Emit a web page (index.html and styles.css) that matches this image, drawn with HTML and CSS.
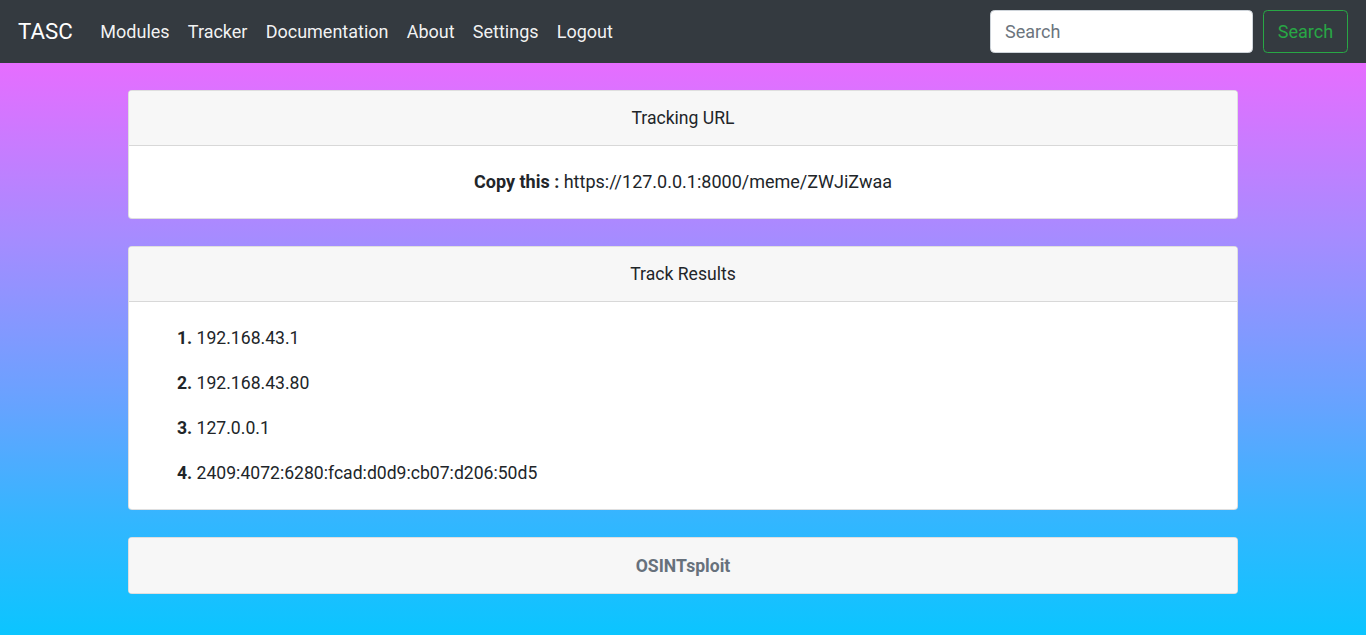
FILE: index.html
```html
<!DOCTYPE html>
<html lang="en">
<head>
<meta charset="utf-8">
<title>TASC - Tracker</title>
<link rel="stylesheet" href="styles.css">
</head>
<body>
<nav class="navbar">
  <a class="brand" href="#">TASC</a>
  <ul class="nav-links">
    <li><a href="#">Modules</a></li>
    <li><a href="#">Tracker</a></li>
    <li><a href="#">Documentation</a></li>
    <li><a href="#">About</a></li>
    <li><a href="#">Settings</a></li>
    <li><a href="#">Logout</a></li>
  </ul>
  <form class="search-form">
    <input class="search-input" type="search" placeholder="Search">
    <button class="search-btn" type="button">Search</button>
  </form>
</nav>
<main class="page">
  <div class="container">
    <section class="card">
      <div class="card-header">Tracking URL</div>
      <div class="card-body center">
        <b>Copy this :</b> https://127.0.0.1:8000/meme/ZWJiZwaa
      </div>
    </section>
    <section class="card">
      <div class="card-header">Track Results</div>
      <div class="card-body results">
        <p><b>1.</b> 192.168.43.1</p>
        <p><b>2.</b> 192.168.43.80</p>
        <p><b>3.</b> 127.0.0.1</p>
        <p><b>4.</b> 2409:4072:6280:fcad:d0d9:cb07:d206:50d5</p>
      </div>
    </section>
    <section class="card">
      <div class="card-header muted">OSINTsploit</div>
    </section>
  </div>
</main>
</body>
</html>
```
FILE: styles.css
```css
* { box-sizing: border-box; }
html, body { margin: 0; height: 100%; }
body {
  font-family: Roboto, "Liberation Sans", sans-serif;
  font-size: 18px;
  line-height: 1.5;
  color: #212529;
  display: flex;
  flex-direction: column;
  background: #0dc6ff;
}
.navbar {
  background: #343a40;
  height: 63px;
  padding: 0 18px;
  display: flex;
  align-items: center;
  flex-shrink: 0;
}
.brand {
  color: #fff;
  text-decoration: none;
  font-size: 22.3px;
  margin-right: 18.5px;
  line-height: 1;
}
.nav-links {
  list-style: none;
  display: flex;
  margin: 0;
  padding: 0;
  flex: 1;
}
.nav-links a {
  color: rgba(255,255,255,.95);
  text-decoration: none;
  padding: 0 9.1px;
  display: block;
}
.search-form {
  display: flex;
  gap: 10px;
}
.search-input {
  width: 263px;
  height: 43px;
  border: 1px solid #ced4da;
  border-radius: 4.5px;
  padding: 0 14px;
  font: inherit;
  color: #495057;
  background: #fff;
}
.search-input::placeholder { color: #6c757d; }
.search-btn {
  height: 43px;
  width: 85px;
  border: 1px solid #28a745;
  border-radius: 4.5px;
  background: transparent;
  color: #28a745;
  font: inherit;
  padding: 0;
}
.page {
  flex: 1;
  background: linear-gradient(180deg, #e66dff 0%, #a78bff 30%, #66a3ff 60%, #33b6ff 80%, #0bc5ff 100%);
  padding-top: 27px;
}
.container {
  width: 1110px;
  margin: 0 auto;
  display: flex;
  flex-direction: column;
  gap: 27px;
}
.card {
  background: #fff;
  border: 1px solid rgba(0,0,0,.125);
  border-radius: 4px;
  overflow: hidden;
}
.card-header {
  background: #f7f7f7;
  height: 55px;
  display: flex;
  align-items: center;
  justify-content: center;
  border-bottom: 1px solid rgba(0,0,0,.125);
  font-size: 17.6px;
}
.card:last-child .card-header { border-bottom: 0; height: 55px; padding-top: 1px; }
.card-header.muted {
  color: #67717c;
  font-weight: 700;
}
.card-body { padding: 22px 20px 23px; line-height: 27px; }
.card-body.center { text-align: center; font-size: 18px; }
.results { padding: 23px 20px 22px 48px; font-size: 17.6px; }
.results p { margin: 0 0 18px; line-height: 27px; }
.results p:last-child { margin-bottom: 0; }
```
